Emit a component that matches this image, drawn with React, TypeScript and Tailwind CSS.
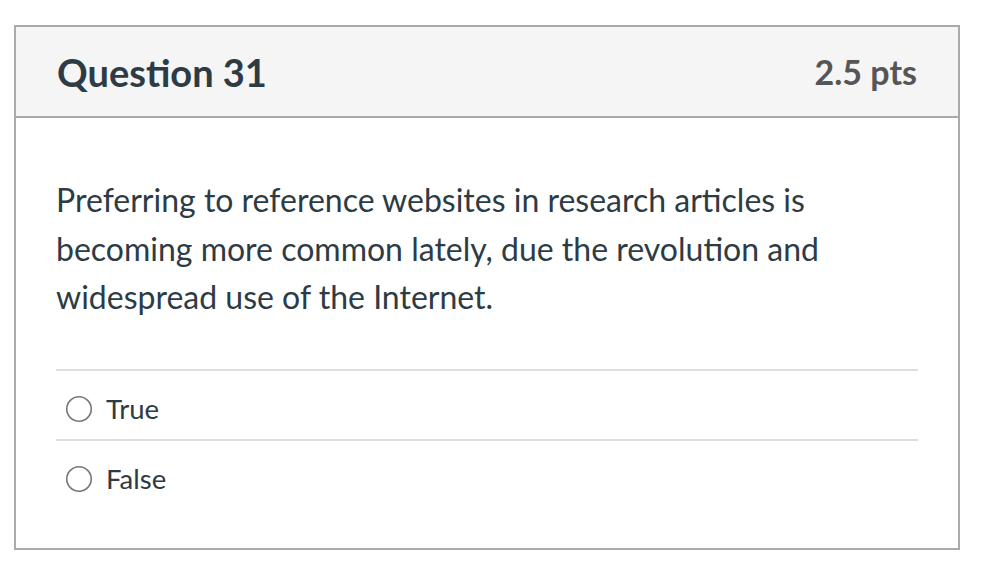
import React from "react";

function Radio() {
  return (
    <svg width="28" height="28" viewBox="0 0 28 28" className="shrink-0">
      <circle cx="14" cy="14" r="12.25" fill="white" stroke="#777" strokeWidth="1.6" />
    </svg>
  );
}

export default function App() {
  const font = { fontFamily: "Lato, 'Noto Sans', sans-serif" };
  return (
    <div className="w-[988px] h-[574px] bg-white pt-[25px] pl-[14px]" style={font}>
      <div className="w-[946px] h-[525px] border-2 border-[#aaaaaa] flex flex-col">
        <div className="h-[91px] bg-[#f5f5f5] border-b-2 border-[#aaaaaa] flex items-center justify-between px-[41px] shrink-0">
          <span className="text-[38px] font-bold text-[#2d3b45] leading-none">Question 31</span>
          <span className="text-[34px] font-bold text-[#565656] leading-none">2.5 pts</span>
        </div>
        <div className="px-[40px] pt-[58px]">
          <p className="text-[32px] leading-[48.5px] text-[#2d3b45]">
            Preferring to reference websites in research articles is becoming more common lately, due the revolution and widespread use of the Internet.
          </p>
          <div className="mt-[47px] border-t-2 border-[#dddddd]">
            <div className="h-[70px] pt-[8px] flex items-center gap-[13px] pl-[9px] border-b-2 border-[#dddddd]">
              <Radio />
              <span className="text-[27.5px] text-[#2d3b45]">True</span>
            </div>
            <div className="h-[68px] pt-[8px] flex items-center gap-[13px] pl-[9px]">
              <Radio />
              <span className="text-[27.5px] text-[#2d3b45]">False</span>
            </div>
          </div>
        </div>
      </div>
    </div>
  );
}
